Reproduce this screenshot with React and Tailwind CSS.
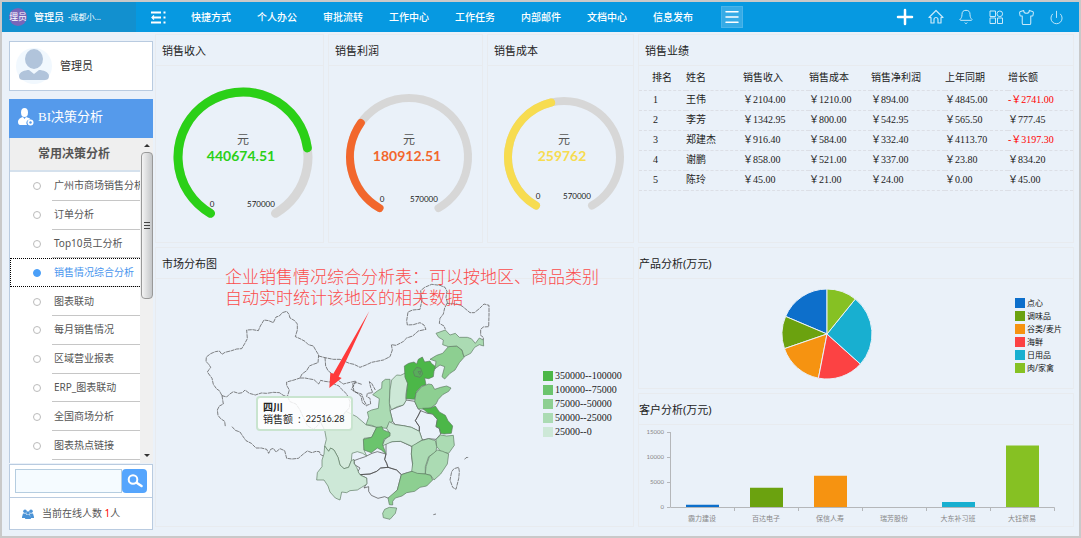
import { useState } from "react";
import clsx from "clsx";
import { Bell, Menu, Plus, Power, Shirt } from "lucide-react";

const NAV = ["快捷方式", "个人办公", "审批流转", "工作中心", "工作任务", "内部邮件", "文档中心", "信息发布"];

const REPORTS = [
  "广州市商场销售分析",
  "订单分析",
  "Top10员工分析",
  "销售情况综合分析",
  "图表联动",
  "每月销售情况",
  "区域营业报表",
  "ERP_图表联动",
  "全国商场分析",
  "图表热点链接",
];

const GAUGES = [
  { title: "销售收入", value: 440674.51, color: "#2bd017", r: 65, width: 9, labelY: 50, minX: -31, maxX: 4 },
  { title: "销售利润", value: 180912.51, color: "#f2672c", r: 59, width: 8, labelY: 45, minX: -27, maxX: 1 },
  { title: "销售成本", value: 259762, color: "#f7dc50", r: 56, width: 8, labelY: 42, minX: -26, maxX: -1 },
];

const RANK_HEAD = ["排名", "姓名", "销售收入", "销售成本", "销售净利润", "上年同期", "增长额"];
const RANK_ROWS = [
  ["1", "王伟", "\uFFE52104.00", "\uFFE51210.00", "\uFFE5894.00", "\uFFE54845.00", "-\uFFE52741.00"],
  ["2", "李芳", "\uFFE51342.95", "\uFFE5800.00", "\uFFE5542.95", "\uFFE5565.50", "\uFFE5777.45"],
  ["3", "郑建杰", "\uFFE5916.40", "\uFFE5584.00", "\uFFE5332.40", "\uFFE54113.70", "-\uFFE53197.30"],
  ["4", "谢鹏", "\uFFE5858.00", "\uFFE5521.00", "\uFFE5337.00", "\uFFE523.80", "\uFFE5834.20"],
  ["5", "陈玲", "\uFFE545.00", "\uFFE521.00", "\uFFE524.00", "\uFFE50.00", "\uFFE545.00"],
];

const MAP_LEGEND = [
  { label: "350000--100000", color: "#4cb748" },
  { label: "100000--75000", color: "#6bc46d" },
  { label: "75000--50000", color: "#8dcf91" },
  { label: "50000--25000", color: "#abdbb3" },
  { label: "25000--0", color: "#cde8d7" },
];

// start / end in degrees, clockwise from the top
const PRODUCTS = [
  { label: "点心", color: "#0d6fcb", from: 293, to: 360 },
  { label: "调味品", color: "#6ba20f", from: 251, to: 293 },
  { label: "谷类/麦片", color: "#f69311", from: 191, to: 251 },
  { label: "海鲜", color: "#fc4243", from: 132, to: 191 },
  { label: "日用品", color: "#18afd0", from: 39, to: 132 },
  { label: "肉/家禽", color: "#86c123", from: 0, to: 39 },
];

const CUSTOMERS = [
  { label: "霸力建设", value: 450, color: "#0d6fcb" },
  { label: "百达电子", value: 3850, color: "#6ba20f" },
  { label: "保信人寿", value: 6250, color: "#f69311" },
  { label: "瑞芳股份", value: 0, color: "#fc4243" },
  { label: "大东补习班", value: 1000, color: "#18afd0" },
  { label: "大钰贸易", value: 12300, color: "#86c123" },
];

// western provinces, the border of Inner Mongolia and the north east
const OUTLINES = [
  "M96 437L88 422 80 417 70 403 66 385 52 366 62 352 56 342 48 335 49 321 62 311 76 305 88 303 96 313 105 307 125 302 140 297 155 296 164 281 172 266 170 240 188 239 205 242 211 228 222 210 236 212 250 218 258 201 268 198 277 188 290 184 297 193 300 204 314 212 322 222 322 240 316 260 330 266 345 274 355 284 370 288 378 302 386 315 384 338 370 343 358 348 350 362 336 372 330 384 312 390 290 396 290 406 298 420 292 440 280 436 268 428 250 427 230 430 214 429 196 435 178 430 165 420 157 428 146 430 130 425 118 433 110 441Z",
  "M96 437L100 462 88 468 82 480 84 496 92 506 104 514 106 530 M126 530L136 541 150 546 158 558 168 572 184 580 198 594 214 594 230 598 236 610 242 598 250 595 258 606 270 596 284 602 290 625 306 627 325 625 340 612 352 603 366 608 378 604 388 605 392 614 400 618",
  "M292 440L300 455 318 462 330 480 344 510 352 527 370 538 382 528 390 515 404 540",
  "M330 384L345 384 360 387 372 389 386 402 392 391 404 394 420 396 434 403 447 408 455 418 470 432 480 455 478 474 468 484 456 500 440 495 420 508 405 500 392 515",
  "M386 318L405 323 430 328 450 328 478 340 492 343 510 352 528 345 545 337 580 330 600 320 607 300 604 284 618 286 638 276 650 264 668 258 685 243 708 238 702 225 690 218 670 224 652 225 650 212 654 186 668 180 690 178 696 150 692 122 704 112 725 103 750 106 765 112 771 124 768 142 772 158 764 174 760 192 750 205 748 220 762 228 766 238",
  "M405 323L407 348 414 362 432 376 446 392 460 402 480 397 498 393 490 408 484 418 497 426 513 438 517 458 530 468",
  "M515 403L500 398 488 400 492 425 515 432 522 452 530 466 542 462 540 445 530 440 532 430 548 428 542 412 538 395 545 400 556 420",
  "M770 160L800 162 816 168 828 178 840 188 853 188 868 176 882 162 897 166 897 195 896 230 880 231 872 238 872 256 880 262 880 270",
  "M785 665L792 656 806 652 808 665 806 686 798 718 788 712 780 690Z",
  "M824 628L828 623 836 622 M730 794L738 792",
];

const PROVINCES = [
  // 河南
  { color: "none", d: "M604 479L622 472 640 465 648 450 674 454 684 476 692 482 684 498 676 512 688 530 688 544 664 532 640 527 616 524 608 514 600 482Z" },
  // 安徽
  { color: "none", d: "M692 482L712 490 728 492 742 508 738 530 748 536 752 552 738 568 716 566 697 570 688 544 688 530 676 512 684 498Z" },
  // 湖南
  { color: "none", d: "M588 580L606 575 632 574 666 590 664 612 670 664 652 668 634 674 620 660 594 652 590 640 584 628 588 612Z" },
  // 贵州
  { color: "none", d: "M492 632L508 626 526 620 546 610 562 605 588 612 584 628 590 640 594 652 572 654 560 664 540 672 508 674 504 664 510 654 494 644Z" },
  // 广西
  { color: "none", d: "M508 674L540 672 560 664 572 654 594 652 620 660 634 674 622 720 598 746 584 740 564 745 544 736 536 724 536 710 522 714 530 700 530 684Z" },
  // 四川
  { color: "#d5ebdd", d: "M405 500L420 508 440 495 456 500 468 484 480 490 500 500 528 524 560 532 545 562 522 565 522 600 530 618 518 610 502 605 486 610 484 632 476 652 462 656 450 645 444 622 432 600 422 594 416 604 404 588 409 568 404 540 392 515Z" },
  // 云南
  { color: "#cde8d7", d: "M404 588L416 604 422 594 432 600 444 622 450 645 462 656 476 652 484 632 492 628 492 640 500 652 506 668 512 676 530 684 531 702 515 712 502 720 480 722 470 728 455 726 450 750 436 744 420 726 414 708 402 690 380 690 382 668 396 650 396 630 402 612Z" },
  // 陕西
  { color: "#abdbb3", d: "M600 388L586 388 576 396 575 415 562 423 548 434 568 446 565 475 545 480 532 486 536 502 528 524 545 526 560 532 590 535 598 520 608 514 600 482 598 450 600 420Z" },
  // 山西
  { color: "#cde8d7", d: "M605 390L620 375 632 376 648 368 646 380 653 400 648 432 648 452 640 465 622 470 604 479 598 460 600 420Z" },
  // 河北
  { color: "#4cb748", d: "M643 348L656 340 672 336 680 342 685 328 697 321 704 336 720 333 724 340 737 350 732 364 730 380 716 386 704 384 708 404 695 408 680 424 674 448 648 446 653 400 645 382Z" },
  { color: "#58ad5a", d: "M670 365L680 352 692 355 698 372 690 382 674 378Z M684 365L692 364 690 374Z" },
  // 山东
  { color: "#8dcf91", d: "M678 430L695 410 716 402 726 404 734 418 752 412 770 408 783 414 776 424 758 434 745 448 738 462 722 474 704 478 684 476 674 454Z" },
  // 江苏
  { color: "#4cb748", d: "M698 475L722 474 736 468 748 486 766 496 774 512 788 528 784 550 762 552 752 550 748 534 738 530 742 508 728 492 712 488Z" },
  // 湖北
  { color: "#cde8d7", d: "M598 515L616 524 640 527 664 532 688 544 697 570 684 578 668 590 646 580 632 574 606 575 576 588 584 570 600 552 590 535Z" },
  // 重庆
  { color: "#6bc46d", d: "M560 532L576 530 580 540 600 548 600 558 582 568 578 584 588 612 574 600 562 594 544 608 522 600 520 568 545 562Z" },
  // 浙江
  { color: "#abdbb3", d: "M738 568L752 555 770 558 790 556 793 586 776 610 754 606 740 590Z" },
  // 江西
  { color: "#abdbb3", d: "M666 588L694 572 716 566 736 572 740 590 738 606 716 620 706 650 706 672 676 672 665 664 668 640 664 612Z" },
  // 福建
  { color: "#abdbb3", d: "M742 600L758 604 776 612 772 642 752 672 732 690 722 676 706 672 708 650 718 620Z" },
  // 广东
  { color: "#8dcf91", d: "M634 674L652 668 666 664 682 670 706 672 722 676 728 690 710 708 690 712 674 724 650 728 636 738 616 744 608 754 608 765 598 764 594 744 622 720Z" },
  // 海南
  { color: "#abdbb3", d: "M578 790L584 778 598 772 620 774 616 790 600 808 580 803Z" },
  // 辽宁
  { color: "#8dcf91", d: "M775 290L800 288 816 300 822 322 808 338 795 360 780 370 764 387 756 380 764 350 750 345 735 356 738 334 720 328 740 316 758 310Z" },
  // 吉林
  { color: "#abdbb3", d: "M738 250L766 240 780 255 796 250 808 262 832 262 844 266 856 280 868 264 880 270 881 288 868 284 854 292 842 310 822 320 816 300 800 288 775 290 758 284 760 270 746 262Z" },
];

function polar(r, deg) {
  const a = (deg * Math.PI) / 180;
  return `${(r * Math.sin(a)).toFixed(2)} ${(-r * Math.cos(a)).toFixed(2)}`;
}

function arc(r, from, to) {
  return `M${polar(r, from)}A${r} ${r} 0 ${to - from > 180 ? 1 : 0} 1 ${polar(r, to)}`;
}

function Panel({ title, children, className, titleClass = "pl-[6px]" }) {
  return (
    <section className={clsx("min-w-0 border border-[#e8ebef]", className)}>
      <h2 className={clsx("flex h-[31px] items-center border-b border-[#e8ebef] pt-[2px] text-[11px] font-normal text-[#222]", titleClass)}>
        {title}
      </h2>
      {children}
    </section>
  );
}

function Gauge({ value, color, r, width, labelY, minX, maxX }) {
  const end = -150 + (value / 570000) * 300;
  return (
    <div className="flex justify-center pl-[6px]">
      <svg viewBox="-68 -91 136 176" className="h-44 w-[136px] overflow-visible" fontFamily="Lato, sans-serif">
        <g fill="none" strokeWidth={width} strokeLinecap="round">
          <path d={arc(r, -150, 150)} stroke="#d7d7d7" />
          <path d={arc(r, -150, end)} stroke={color} />
        </g>
        <text x="0" y="-13" textAnchor="middle" fontSize="12" fill="#555" fontFamily="Noto Sans CJK SC">元</text>
        <text x="-2" y="4" textAnchor="middle" fontSize="14" fontWeight="700" fill={color}>{value}</text>
        <text x={minX} y={labelY} textAnchor="middle" fontSize="8" fill="#222">0</text>
        <text x={maxX} y={labelY} fontSize="8" fill="#222">570000</text>
      </svg>
    </div>
  );
}

function TopBar() {
  return (
    <header className="flex h-[30px] items-center bg-[#0699e1] text-[10px] text-white">
      <div className="flex h-full w-[134px] shrink-0 items-center bg-[#1290cf] pl-[7px]">
        <span className="flex h-[18px] w-[18px] items-center justify-center overflow-hidden rounded-full bg-[#7866b9] text-[9px] whitespace-nowrap">
          理员
        </span>
        <span className="ml-[7px] font-medium">管理员</span>
        <span className="ml-1 text-[8px]">-成都小...</span>
      </div>
      <button type="button" aria-label="收起菜单" className="ml-[15px]">
        <svg viewBox="0 0 15 13" className="h-[13px] w-[15px]" fill="none" stroke="#fff" strokeWidth="1.8">
          <path d="M0 1.500H10M2 6.500H10M0 11.500H10M12.500 1.500H14.500M12.500 6.500H14.500M12.500 11.500H14.500" />
          <path d="M3 4.500L1 6.500 3 8.500" strokeWidth="1.300" />
        </svg>
      </button>
      <nav className="ml-[25px] flex gap-[26px] font-medium whitespace-nowrap">
        {NAV.map((item) => (
          <a key={item} href="#">{item}</a>
        ))}
      </nav>
      <button type="button" aria-label="更多" className="ml-7 flex h-[22px] w-[22px] items-center justify-center border border-[#4bb4e9] bg-[#36abe6]">
        <Menu size={18} strokeWidth={2} />
      </button>
      <div className="mr-[15px] ml-auto flex items-center gap-[14px] text-[#c9e9f9]">
        <button type="button" aria-label="新建" className="-mx-[3px] text-white"><Plus size={24} strokeWidth={2.5} /></button>
        <button type="button" aria-label="首页">
          <svg viewBox="0 0 16 16" className="h-4 w-4" fill="none" stroke="currentColor" strokeWidth="1.2" strokeLinejoin="round">
            <path d="M1 8.500L8 1.500 15 8.500H13V14H10V10.500A2 2 0 0 0 6 10.500V14H3V8.500Z" />
          </svg>
        </button>
        <button type="button" aria-label="消息"><Bell size={16} strokeWidth={1.5} /></button>
        <button type="button" aria-label="应用">
          <svg viewBox="0 0 16 16" className="h-4 w-4" fill="none" stroke="currentColor" strokeWidth="1">
            <path d="M2 2H7.500V7.500H2ZM2 9H7.500V14.500H2ZM9.500 9H14.500V14.500H9.500Z" />
            <circle cx="11.800" cy="4.800" r="2.800" />
          </svg>
        </button>
        <button type="button" aria-label="换肤"><Shirt size={17} strokeWidth={1.5} /></button>
        <button type="button" aria-label="退出"><Power size={15} strokeWidth={1.5} /></button>
      </div>
    </header>
  );
}

function Sidebar() {
  const [active, setActive] = useState("销售情况综合分析");

  return (
    <aside className="w-36 shrink-0 pt-[9px] text-[10px] text-[#555]">
      <div className="flex h-[50px] items-center border border-[#b9cbe0] bg-white pl-[6px]">
        <svg viewBox="0 0 36 36" className="h-9 w-9">
          <circle cx="18" cy="18" r="18" fill="#f1f8fe" />
          <ellipse cx="18" cy="11" rx="9" ry="10" fill="#b1c4db" />
          <path d="M3 28C3 24 9 22 13 22L18 26 23 22C27 22 33 24 33 28C33 31 31 32 29 32H7C5 32 3 31 3 28Z" fill="#b1c4db" />
        </svg>
        <span className="ml-2 text-[11px] text-[#333]">管理员</span>
      </div>

      <div className="mt-2 flex h-[39px] items-center bg-[#559aeb] pb-1 pl-[9px] text-white">
        <svg viewBox="0 0 16 18" className="h-[18px] w-4" fill="#fff">
          <ellipse cx="6.500" cy="4.500" rx="3.500" ry="4.500" />
          <path d="M0 14C0 11 3 9.500 5 9L6.500 11 8 9C10 9.500 12 10 12.500 11.500A3.500 3.500 0 0 0 9 17H2C1 17 0 16 0 14Z" />
          <circle cx="12.500" cy="14.500" r="3" />
          <circle cx="12.500" cy="14.500" r="1.200" fill="#559aeb" />
        </svg>
        <h2 className="ml-1 font-['Liberation_Serif','Noto_Sans_CJK_SC',serif] text-[13px]">BI决策分析</h2>
      </div>

      <div className="flex border-l border-[#b9cbe0] bg-white">
        <div className="min-w-0 flex-1 pb-[3px]">
          <h3 className="flex h-[34px] items-center border-b-2 border-[#d5e1ed] bg-[#efefef] pl-7 text-[12px] font-bold">常用决策分析</h3>
          <ul className="grid h-72 auto-rows-fr">
            {REPORTS.map((item) => (
              <li key={item} className={clsx("flex", item === active && "outline-1 -outline-offset-1 outline-dotted outline-black")}>
                <button type="button" onClick={() => setActive(item)} className="flex min-w-0 flex-1 items-center">
                  <span
                    className={clsx(
                      "mr-[11px] ml-[23px] h-2 w-2 shrink-0 rounded-full border",
                      item === active ? "border-[#4a9ff8] bg-[#4a9ff8]" : "border-[#bbb]"
                    )}
                  />
                  <span
                    className={clsx(
                      "flex h-full min-w-0 flex-1 items-center overflow-hidden border-b border-[#c6c6c6] pl-[2px] whitespace-nowrap",
                      item === active && "text-[#4a96ee]"
                    )}
                  >
                    {item}
                  </span>
                </button>
              </li>
            ))}
          </ul>
        </div>
        {/* scrollbar */}
        <div className="flex w-[13px] flex-col items-center bg-[#f0f0f0]">
          <span className="flex h-[14px] items-center">
            <svg viewBox="0 0 6 3" className="h-[3px] w-[6px]"><path d="M0 3L3 0 6 3Z" fill="#333" /></svg>
          </span>
          <div className="flex h-[147px] w-[12px] items-center justify-center rounded-sm border border-[#999] bg-linear-to-r from-[#f4f4f4] to-[#c4c6c8]">
            <svg viewBox="0 0 6 7" className="h-[7px] w-[6px]" stroke="#444"><path d="M0 .5H6M0 3.500H6M0 6.500H6" /></svg>
          </div>
          <span className="mt-auto flex h-4 items-center">
            <svg viewBox="0 0 6 3" className="h-[3px] w-[6px]"><path d="M0 0L3 3 6 0Z" fill="#333" /></svg>
          </span>
        </div>
      </div>

      <div className="mt-px border border-[#b9cbe0] bg-white">
        <form className="flex h-[33px] items-center border-b border-[#b9cbe0] px-[5px]" onSubmit={(e) => e.preventDefault()}>
          <input type="text" aria-label="搜索" className="h-6 min-w-0 flex-1 border border-[#b5cde0] bg-[#f5fbff] px-1 outline-none" />
          <button type="submit" aria-label="搜索" className="flex h-6 w-[25px] items-center justify-center rounded-sm bg-[#55a5fd]">
            <svg viewBox="0 0 16 14" className="h-[14px] w-4" fill="none" stroke="#fff" strokeLinecap="round">
              <circle cx="6" cy="5.500" r="4.300" strokeWidth="2" />
              <path d="M10 9L14.500 12" strokeWidth="2.500" />
            </svg>
          </button>
        </form>
        <p className="flex h-[31px] items-center pl-3">
          <svg viewBox="0 0 12 10" className="mr-2 h-[10px] w-3" fill="#4b93d6">
            <circle cx="3" cy="2.200" r="1.800" />
            <circle cx="9" cy="2.200" r="1.800" />
            <circle cx="6" cy="4" r="1.800" />
            <path d="M0 8L1 4.500H4L4.500 6 3 9H0ZM12 8L11 4.500H8L7.500 6 9 9H12ZM3 10L4 6H8L9 10Z" />
          </svg>
          当前在线人数&nbsp;<span className="text-[#f00]">1</span>人
        </p>
      </div>
    </aside>
  );
}

function MarketMap() {
  return (
    <div className="flex">
      <div className="relative w-[385px] shrink-0">
        <svg viewBox="-102 87 1155 741" className="h-[247px] w-full" stroke="#444" strokeWidth="2" strokeLinejoin="round">
          {OUTLINES.map((d) => (
            <path key={d} d={d} fill="none" strokeDasharray="12 2" />
          ))}
          {PROVINCES.map((p) => (
            <path key={p.d} d={p.d} fill={p.color} stroke={p.color === "none" ? "#444" : "#5d7a62"} />
          ))}
          <path d="M538 183L446 380 455 384 418 414 421 368 430 371Z" fill="#ff3a3a" stroke="none" />
        </svg>
        <div className="absolute top-[117px] left-[100px] h-[35px] w-[97px] rounded-sm border-2 border-[#c9e4cf] bg-white/85 pt-[3px] pl-[5px] text-[10px] leading-3 whitespace-nowrap text-[#222]">
          <b className="block">四川</b>
          <span className="flex">
            销售额<span className="mx-[5px]">:</span>
            <span className="font-[Lato] text-[9px]">22516.28</span>
          </span>
        </div>
        <p className="absolute -top-[13px] left-[69px] text-[17px] leading-[21px] font-light whitespace-nowrap text-[#fb4b4b]">
          {"企业销售情况综合分析表\uFF1A可以按地区、商品类别"}
          <br />
          自动实时统计该地区的相关数据
        </p>
      </div>
      <ul className="mt-[90px] ml-[2px] font-['Liberation_Serif','Noto_Sans_CJK_SC',serif] text-[10px] leading-[14px] whitespace-nowrap text-[#222]">
        {MAP_LEGEND.map((l) => (
          <li key={l.label} className="flex items-center gap-[2px]">
            <span className="h-[10px] w-[10px]" style={{ background: l.color }} />
            {l.label}
          </li>
        ))}
      </ul>
    </div>
  );
}

function ProductPie() {
  return (
    <div className="flex h-[109px]">
      <div className="flex flex-1 justify-center">
        <svg viewBox="-46 -55 92 109" className="h-[109px] w-[92px]" stroke="#eaf1f9">
          {PRODUCTS.map((p) => (
            <path key={p.label} d={`${arc(45, p.from, p.to)}L0 0Z`} fill={p.color} />
          ))}
        </svg>
      </div>
      <ul className="mt-[17px] w-[58px] text-[8px] leading-[13px] whitespace-nowrap text-[#111]">
        {PRODUCTS.map((p) => (
          <li key={p.label} className="flex items-center gap-[2px]">
            <span className="h-[10px] w-[10px]" style={{ background: p.color }} />
            {p.label}
          </li>
        ))}
      </ul>
    </div>
  );
}

function CustomerBars() {
  return (
    <svg viewBox="0 1 434 101" className="block w-full" fill="#888" fontSize="7">
      <path
        d="M31.500 8V83.500H415.500V87M28 8.500H31M28 33.500H31M28 58.500H31M28 83.500H31M95.500 84V87M159.500 84V87M223.500 84V87M287.500 84V87M351.500 84V87"
        fill="none"
        stroke="#b5b7ba"
      />
      {[15000, 10000, 5000, 0].map((n, i) => (
        <text key={n} x="25" y={10 + i * 25} textAnchor="end" fontSize="6" fontFamily="Lato">{n}</text>
      ))}
      {CUSTOMERS.map((c, i) => {
        const h = c.value / 200;
        return (
          <g key={c.label}>
            <rect x={47 + i * 64} y={83 - h} width="33" height={h} fill={c.color} />
            <text x={63 + i * 64} y="97" textAnchor="middle">{c.label}</text>
          </g>
        );
      })}
    </svg>
  );
}

function RankTable() {
  return (
    <table className="w-full table-fixed text-left text-[10px] whitespace-nowrap text-[#222]">
      <colgroup>
        <col className="w-[47px]" />
        <col className="w-[57px]" />
        <col className="w-[66px]" />
        <col className="w-[62px]" />
        <col className="w-[74px]" />
        <col className="w-[63px]" />
        <col />
      </colgroup>
      <thead>
        <tr className="h-6 border-b border-dashed border-[#dcdfe6]">
          {RANK_HEAD.map((h, i) => (
            <th key={h} className={clsx("p-0 font-normal", i === 0 && "pl-[13px]")}>{h}</th>
          ))}
        </tr>
      </thead>
      <tbody className="font-['Liberation_Serif','Noto_Sans_CJK_SC',serif] leading-4">
        {RANK_ROWS.map((row) => (
          <tr key={row[0]} className="h-5 border-b border-dashed border-[#dcdfe6]">
            {row.map((cell, i) => (
              <td key={i} className={clsx("p-0", i === 0 && "pl-[14px]", cell.startsWith("-") && "text-[#f00]")}>
                {cell}
              </td>
            ))}
          </tr>
        ))}
      </tbody>
    </table>
  );
}

export default function App() {
  return (
    <div className="min-h-screen border-2 border-[#c9c9c9] bg-[#eaf1f9] font-['Noto_Sans','Noto_Sans_CJK_SC',sans-serif]">
      <TopBar />
      <div className="flex gap-[2px] pr-[5px] pl-[7px]">
        <Sidebar />
        <main className="grid min-w-0 flex-1 grid-cols-[479fr_436fr] gap-1 pt-[2px]">
          <div className="flex min-w-0 flex-col gap-1">
            <div className="grid grid-cols-[169fr_155fr_147fr] gap-1">
              {GAUGES.map((g) => (
                <Panel key={g.title} title={g.title}>
                  <Gauge {...g} />
                </Panel>
              ))}
            </div>
            <Panel title="市场分布图">
              <MarketMap />
            </Panel>
          </div>
          <div className="flex min-w-0 flex-col gap-1">
            <Panel title="销售业绩" className="h-[209px]">
              <RankTable />
            </Panel>
            <Panel title="产品分析(万元)" titleClass="pl-0">
              <ProductPie />
            </Panel>
            <Panel title="客户分析(万元)" titleClass="pl-0">
              <CustomerBars />
            </Panel>
          </div>
        </main>
      </div>
    </div>
  );
}
